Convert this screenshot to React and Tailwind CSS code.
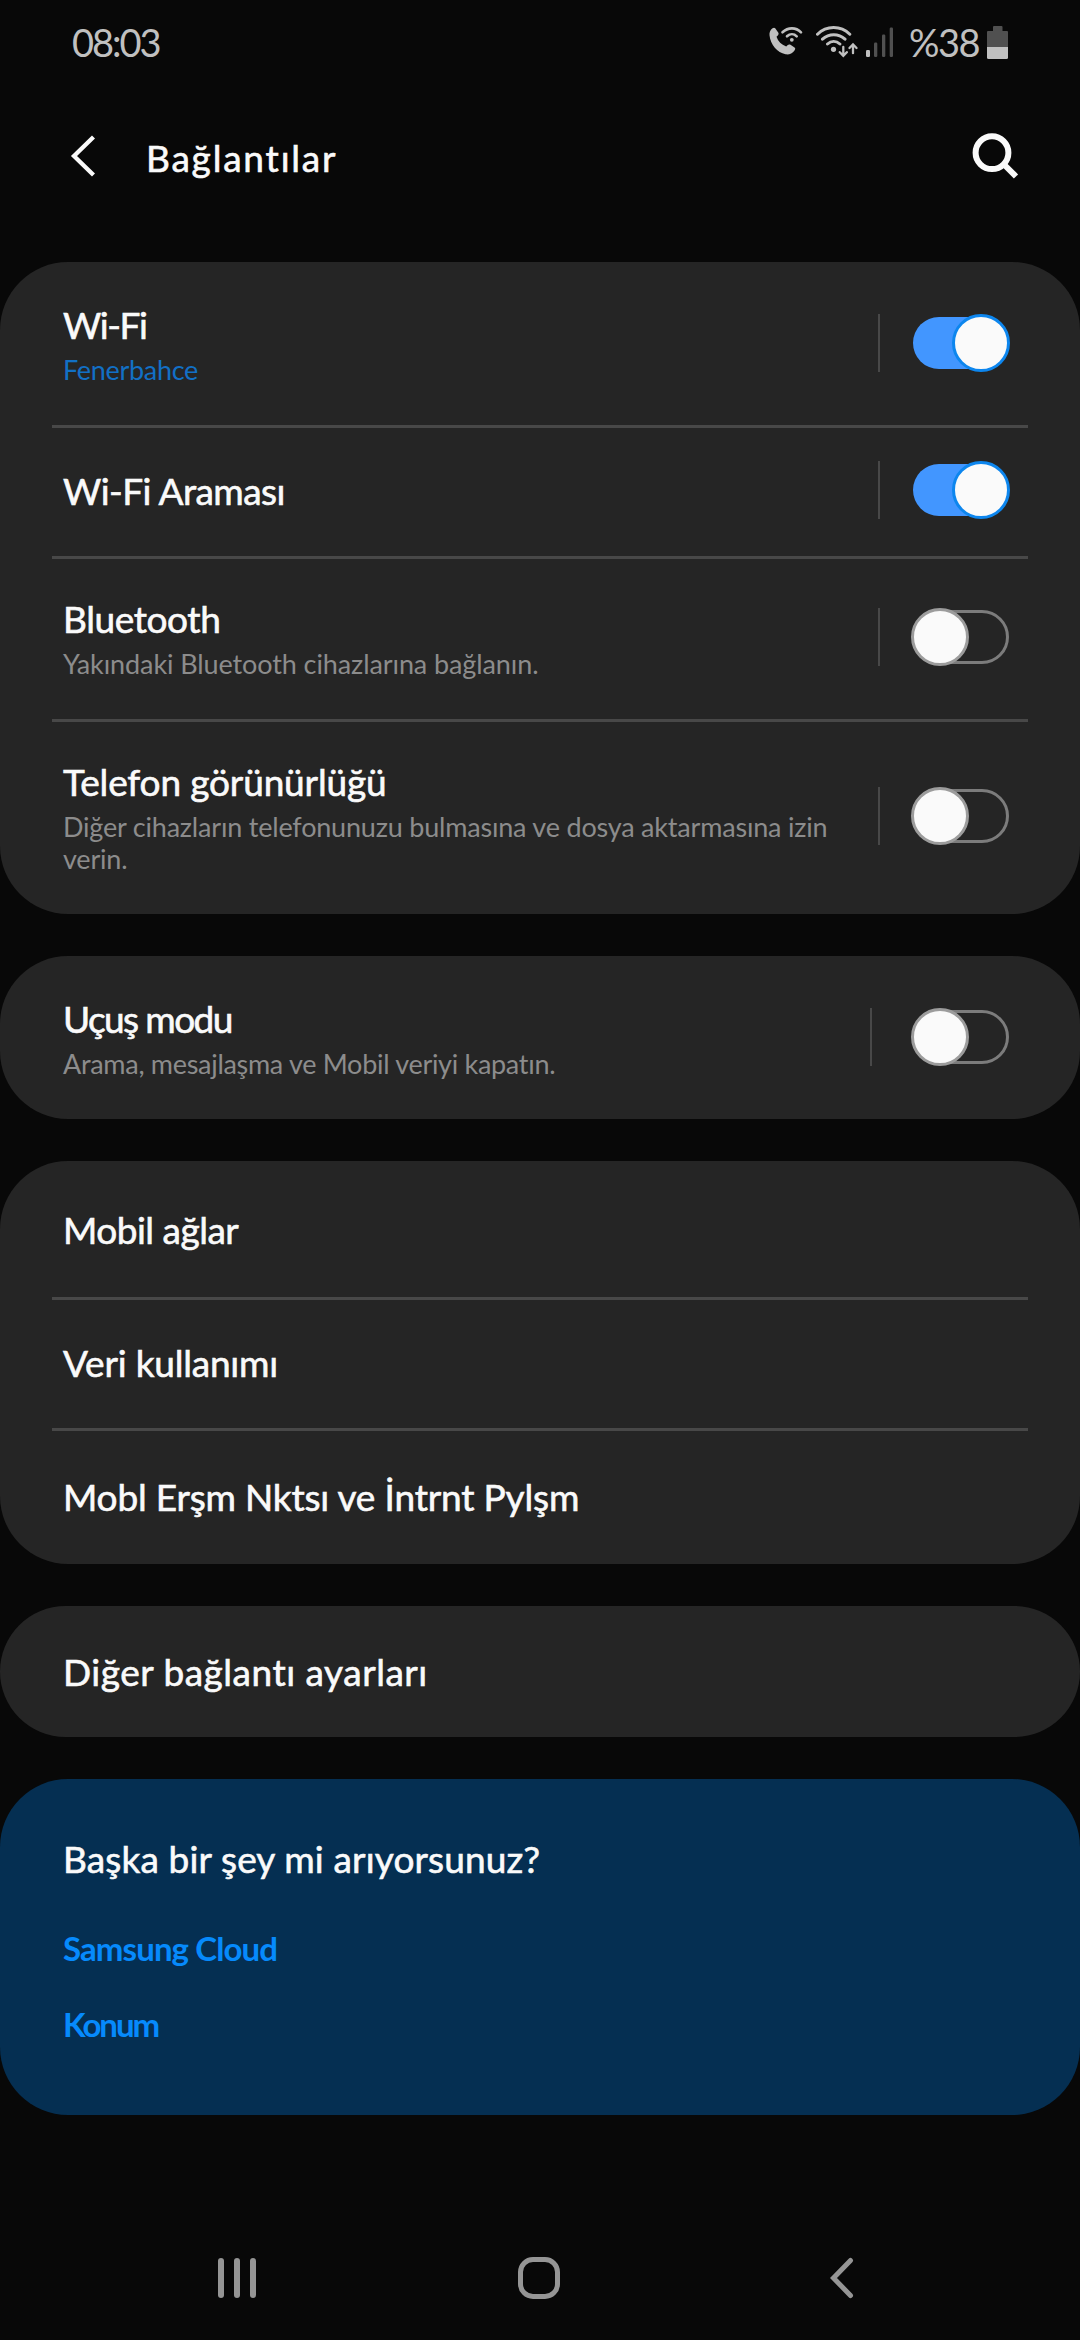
import { useState } from 'react';
import clsx from 'clsx';

const connectionItems = [
  { id: 'wifi', title: 'Wi-Fi', titleClass: 'tracking-[-1.4px]', lines: ['Fenerbahce'], lineClass: 'text-[#1270c6] tracking-[-0.3px]', height: 'h-[163px]', on: true },
  { id: 'wifi-call', title: 'Wi-Fi Araması', titleClass: 'tracking-[-0.55px]', height: 'h-[131px]', on: true },
  { id: 'bluetooth', title: 'Bluetooth', titleClass: 'tracking-[-0.4px]', lines: ['Yakındaki Bluetooth cihazlarına bağlanın.'], lineClass: 'text-[#8c8c8c] tracking-[-0.1px]', height: 'h-[163px]', on: false },
  {
    id: 'visibility',
    title: 'Telefon görünürlüğü',
    titleClass: 'tracking-[-0.15px]',
    lines: ['Diğer cihazların telefonunuzu bulmasına ve dosya aktarmasına izin', 'verin.'],
    lineClass: 'text-[#8c8c8c] tracking-[-0.2px]',
    height: 'h-[195px]',
    on: false,
  },
];

const airplaneItem = {
  id: 'airplane',
  title: 'Uçuş modu',
  titleClass: 'tracking-[-1.6px]',
  lines: ['Arama, mesajlaşma ve Mobil veriyi kapatın.'],
  lineClass: 'text-[#8c8c8c] tracking-[-0.3px]',
  height: 'h-[163px]',
  on: false,
};

const networkItems = [
  { id: 'mobile', title: 'Mobil ağlar', titleClass: 'tracking-[-0.5px]', height: 'h-[136px]' },
  { id: 'data', title: 'Veri kullanımı', titleClass: 'tracking-[-0.2px]', height: 'h-[131px]' },
  { id: 'hotspot', title: 'Mobl Erşm Nktsı ve İntrnt Pylşm', titleClass: 'tracking-[-0.18px]', height: 'h-[136px]' },
];

const otherItem = { id: 'other', title: 'Diğer bağlantı ayarları', titleClass: 'tracking-[0.52px]', height: 'h-[131px]' };

function CallIcon() {
  return (
    <svg width="34" height="34" viewBox="0 0 34 34" fill="none">
      <path d="M3.2 3.6c1-1 2.2-1.4 3-.3l3 4.2c.7 1 .4 2-.4 2.9l-1.3 1.4c1.6 4.6 4.8 7.9 9.7 9.8l1.3-1.4c.9-.9 2-1.1 3-.4l4 2.7c1 .7.9 1.8 0 2.9-2.3 2.8-5.2 4.6-9 3.9C8.300 27.700 1.500 19.600.5 10.300.2 7.500 1.300 5.200 3.200 3.600z" fill="#c0c0c0" />
      <path d="M13.5 7.3c5.5-5.2 13.5-5.2 18.5 0M18 11.300c3-2.800 7-2.800 9.700 0" stroke="#c0c0c0" strokeWidth="2.6" strokeLinecap="round" />
      <circle cx="22.8" cy="14.8" r="1.9" fill="#c0c0c0" />
    </svg>
  );
}

function WifiIcon() {
  return (
    <svg width="42" height="34" viewBox="0 0 42 34" fill="none" stroke="#c0c0c0" strokeLinecap="round">
      <path d="M1.5 9.2c9-8.9 23.3-8.9 32.3 0M6.5 14.2c6.5-6.1 16-6.1 22.5 0M11.5 19c3.700-3.400 8.700-3.400 12.400 0" strokeWidth="3" />
      <circle cx="17.5" cy="24.3" r="2.6" fill="#c0c0c0" stroke="none" />
      <path d="M27.3 22v8.5M23.8 27.2l3.5 3.7 3.5-3.7M37 28.2v-8.4M33.5 23l3.500-3.700 3.500 3.700" strokeWidth="2.3" />
    </svg>
  );
}

function SignalIcon() {
  return (
    <svg width="28" height="34" viewBox="0 0 28 34">
      <rect x="0" y="25" width="4" height="7" rx="1.2" fill="#c0c0c0" />
      <rect x="8" y="17.5" width="3.3" height="14.5" rx="1.2" fill="#505050" />
      <rect x="16" y="9.5" width="3.3" height="22.5" rx="1.2" fill="#505050" />
      <rect x="23.7" y="2.5" width="3.3" height="29.5" rx="1.2" fill="#505050" />
    </svg>
  );
}

function BatteryIcon() {
  return (
    <svg width="21" height="34" viewBox="0 0 21 34">
      <path d="M6 6V2a1 1 0 0 1 1-1h7.500a1 1 0 0 1 1 1v4H20a1 1 0 0 1 1 1v15H0V7a1 1 0 0 1 1-1z" fill="#505050" />
      <path d="M0 22h21v10.500a1.500 1.500 0 0 1-1.500 1.500h-18A1.500 1.500 0 0 1 0 32.500z" fill="#c0c0c0" />
    </svg>
  );
}

function StatusBar() {
  return (
    <div className="flex h-[84px] items-center pl-[72px] pr-[72px] text-[#c0c0c0]">
      <span className="text-[38px] leading-[46px] tracking-[-2px]">08:03</span>
      <div className="ml-auto flex items-center">
        <div className="mr-[13px]"><CallIcon /></div>
        <div className="mr-[8px]"><WifiIcon /></div>
        <div className="mr-[15px]"><SignalIcon /></div>
        <span className="mr-[8px] w-[70px] whitespace-nowrap text-[38px] leading-[46px] tracking-[-1.5px]">%38</span>
        <BatteryIcon />
      </div>
    </div>
  );
}

function Header() {
  return (
    <header className="flex h-[144px] items-center pl-[69px] pr-[59px]">
      <svg className="mr-[49px]" width="28" height="44" viewBox="0 0 28 44" fill="none">
        <path d="M24.500 3 5 22l19.500 19" stroke="#fafafa" strokeWidth="4.3" />
      </svg>
      <h1 className="mt-[3px] text-[37px] leading-[44px] tracking-[1.8px] text-[#fafafa] [-webkit-text-stroke:0.6px]">Bağlantılar</h1>
      <svg className="ml-auto" width="50" height="48" viewBox="0 0 50 48" fill="none" stroke="#fafafa">
        <circle cx="21" cy="20.7" r="16.4" strokeWidth="6" />
        <path d="m32.500 32 12.500 12.500" strokeWidth="6" />
      </svg>
    </header>
  );
}

function Toggle({ on, onClick }) {
  return (
    <button onClick={onClick} className="relative mb-px h-[58px] w-[99px] shrink-0">
      <span
        className={clsx(
          'absolute rounded-full',
          on ? 'left-[2px] top-[3px] h-[52px] w-[94px] bg-[#4296ff]' : 'left-[2px] top-[2px] h-[54px] w-[96px] border-[3px] border-[#7c7c7c]'
        )}
      />
      <span
        className={clsx(
          'absolute top-0 size-[58px] rounded-full border-[3px] bg-[#fafafa]',
          on ? 'left-[41px] border-[#0d86ee]' : 'left-0 border-[#9c9c9c]'
        )}
      />
    </button>
  );
}

function Row({ item, first, children }) {
  return (
    <div className={clsx('relative flex items-center pl-[63px] pr-[70px]', item.height)}>
      {!first && <div className="absolute left-[52px] right-[52px] top-0 h-[3px] bg-[#484848]" />}
      <div className="flex-1 whitespace-nowrap pt-px">
        <div className={clsx('text-[37px] leading-[44px] text-[#fafafa] [-webkit-text-stroke:0.6px]', item.titleClass)}>{item.title}</div>
        {item.lines && (
          <div className={clsx('mt-[7px] text-[27px] leading-[32px]', item.lineClass)}>
            {item.lines.map((line) => <div key={line}>{line}</div>)}
          </div>
        )}
      </div>
      {children}
    </div>
  );
}

function ToggleRow({ item, first, wide }) {
  const [on, setOn] = useState(item.on);

  return (
    <Row item={item} first={first}>
      <div className={clsx('mb-px h-[58px] w-[2px] shrink-0 bg-[#484848]', wide ? 'mr-[39px]' : 'mr-[31px]')} />
      <Toggle on={on} onClick={() => setOn(!on)} />
    </Row>
  );
}

function Card({ children }) {
  return <section className="rounded-[68px] bg-[#252525]">{children}</section>;
}

function NavBar() {
  return (
    <nav className="mt-auto flex h-[124px] items-center justify-between pl-[218px] pr-[226px]">
      <div className="flex gap-[10px]">
        <span className="h-10 w-[6px] rounded-full bg-[#959595]" />
        <span className="h-10 w-[6px] rounded-full bg-[#959595]" />
        <span className="h-10 w-[6px] rounded-full bg-[#959595]" />
      </div>
      <span className="ml-[-8px] size-[42px] rounded-[15px] border-[5px] border-[#959595]" />
      <svg width="24" height="42" viewBox="0 0 24 42" fill="none">
        <path d="M20.500 3.500 3.500 21l17 17.500" stroke="#959595" strokeWidth="5" strokeLinecap="round" />
      </svg>
    </nav>
  );
}

export default function App() {
  return (
    <div className="flex h-[2340px] w-[1080px] flex-col overflow-hidden bg-[#080808] font-['Lato','Noto_Sans',sans-serif] [font-variant-ligatures:none]">
      <StatusBar />
      <Header />

      <main className="mt-[34px] flex flex-col gap-[42px]">
        <Card>
          {connectionItems.map((item, index) => (
            <ToggleRow key={item.id} item={item} first={index === 0} />
          ))}
        </Card>

        <Card>
          <ToggleRow item={airplaneItem} first wide />
        </Card>

        <Card>
          {networkItems.map((item, index) => (
            <Row key={item.id} item={item} first={index === 0} />
          ))}
        </Card>

        <Card>
          <Row item={otherItem} first />
        </Card>

        {/* Related settings */}
        <section className="h-[336px] rounded-[68px] bg-[#052f52] pl-[63px] pt-[58px]">
          <h2 className="text-[37px] leading-[44px] tracking-[0.15px] text-[#fafafa] [-webkit-text-stroke:0.6px]">Başka bir şey mi arıyorsunuz?</h2>
          <div className="mt-[47px] flex flex-col items-start gap-[36px] text-[33px] font-bold leading-[40px] text-[#068afc]">
            <a className="tracking-[-0.9px]">Samsung Cloud</a>
            <a className="tracking-[-2px]">Konum</a>
          </div>
        </section>
      </main>

      <NavBar />
    </div>
  );
}
